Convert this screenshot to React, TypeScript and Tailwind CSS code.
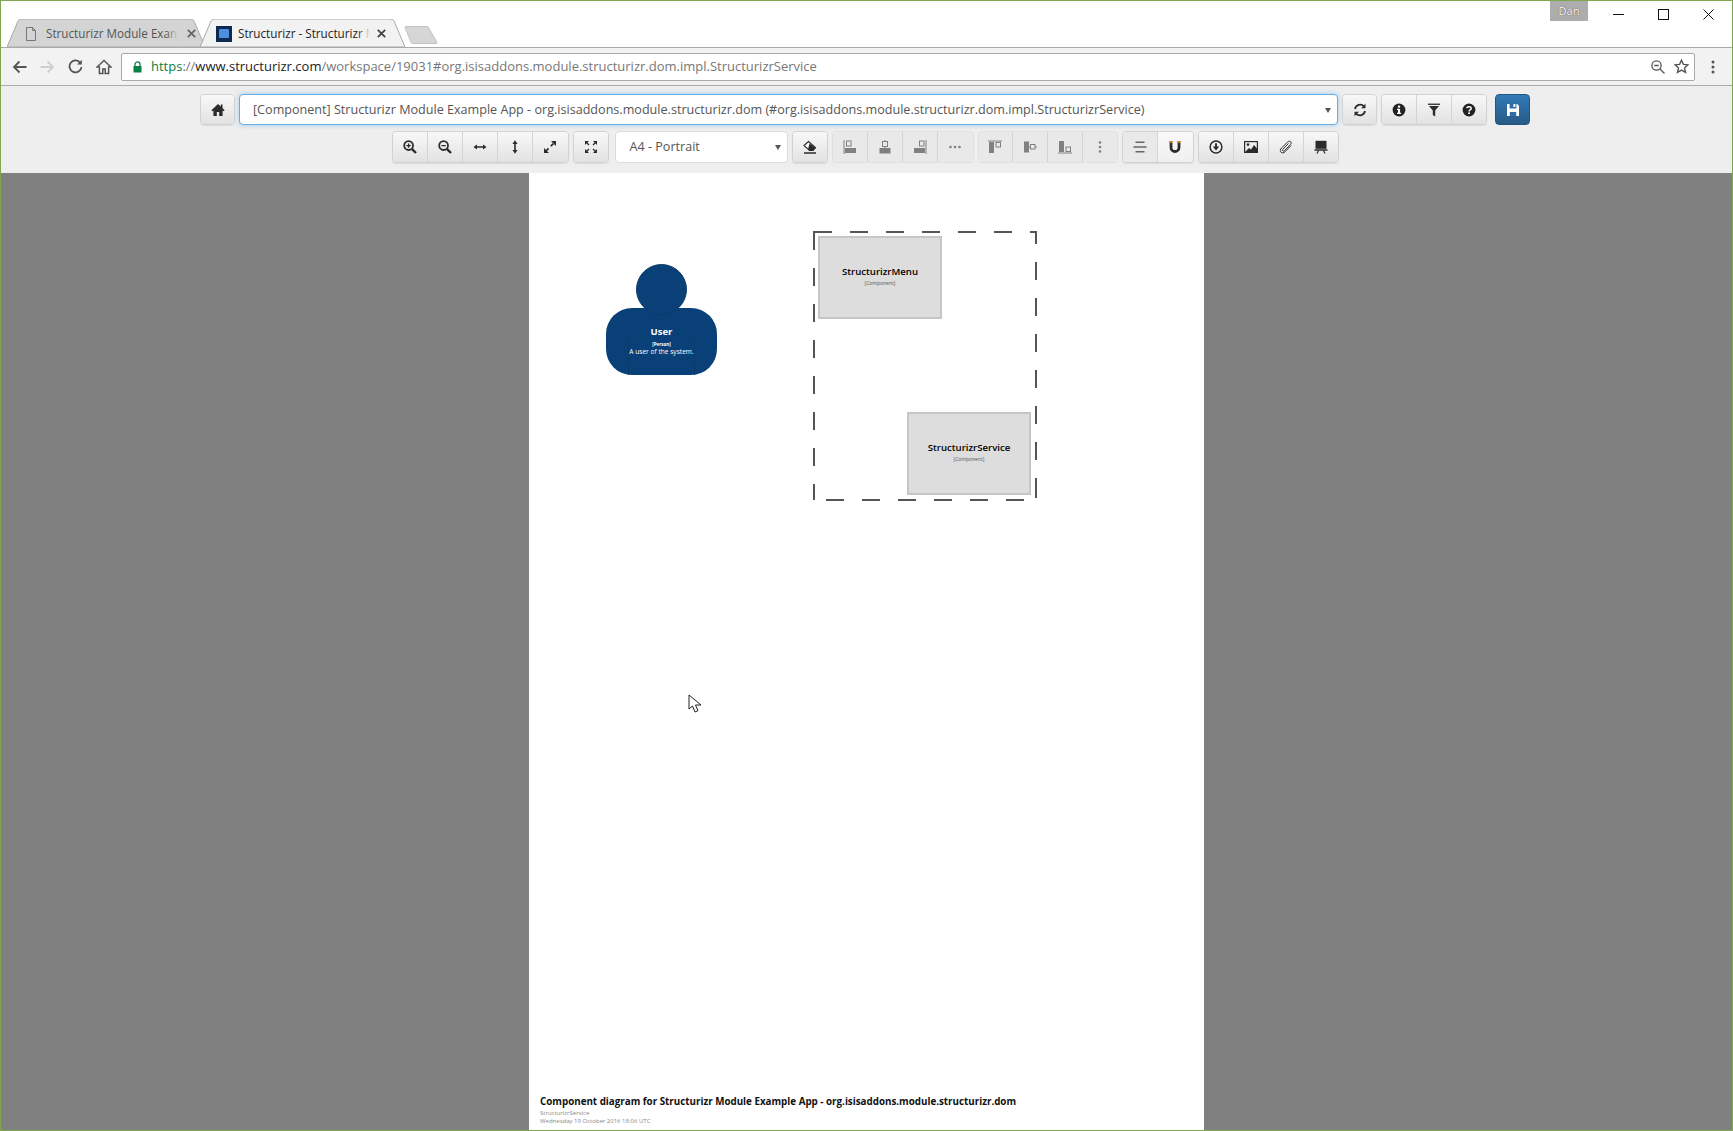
import React from "react";

const S = ({ children, w = 14, h = 14, o = 1 }: { children: React.ReactNode; w?: number; h?: number; o?: number }) => (
  <svg viewBox="0 0 14 14" width={w} height={h} opacity={o} fill="none" stroke="#2b2b2b" strokeWidth={1.6}>
    {children}
  </svg>
);

const ZoomIn = () => (
  <S>
    <circle cx="5.6" cy="5.6" r="4.4" strokeWidth="1.8" />
    <path d="M8.8 8.8L13 13" strokeWidth="2.4" />
    <path d="M3.4 5.6h4.4M5.6 3.4v4.4" strokeWidth="1.4" />
  </S>
);
const ZoomOutI = () => (
  <S>
    <circle cx="5.6" cy="5.6" r="4.4" strokeWidth="1.8" />
    <path d="M8.8 8.8L13 13" strokeWidth="2.4" />
    <path d="M3.4 5.6h4.4" strokeWidth="1.4" />
  </S>
);
const ResizeH = () => (
  <S>
    <path d="M3 7h8" />
    <path d="M0.5 7L4 4.4v5.2zM13.5 7L10 4.4v5.2z" fill="#2b2b2b" stroke="none" />
  </S>
);
const ResizeV = () => (
  <S>
    <path d="M7 3v8" />
    <path d="M7 0.3L4.4 4h5.2zM7 13.7L4.4 10h5.2z" fill="#2b2b2b" stroke="none" />
  </S>
);
const ResizeFull = () => (
  <S>
    <path d="M3 11L11 3" strokeWidth="1.7" strokeDasharray="3.6 3.2" />
    <path d="M8 1h5v5zM1 8v5h5z" fill="#2b2b2b" stroke="none" />
  </S>
);
const Fullscreen = () => (
  <S>
    <path d="M1 1h4L1 5zM13 1H9l4 4zM1 13h4l-4-4zM13 13H9l4-4z" fill="#2b2b2b" stroke="none" />
    <path d="M2.5 2.5L5 5M11.5 2.5L9 5M2.5 11.5L5 9M11.5 11.5L9 9" strokeWidth="1.3" />
  </S>
);
const Eraser = () => (
  <S>
    <path d="M1 5.5L5.5 1.5L12.5 7.5L10 10.5H6.5z" fill="#fff" strokeWidth="1.1" />
    <path d="M6.5 3.5L12.8 8L10 10.8H6.4L5 9.3z" fill="#2b2b2b" stroke="none" />
    <path d="M1 13h12" strokeWidth="1.5" />
  </S>
);
const Al = ({ variant }: { variant: string }) => {
  const c = "#808080";
  const map: Record<string, React.ReactNode> = {
    l: (
      <>
        <path d="M1 0v14" stroke={c} strokeWidth="1" />
        <rect x="3.5" y="1" width="4.5" height="5" stroke={c} strokeWidth="1" />
        <rect x="2" y="8" width="11" height="5" fill={c} stroke="none" />
      </>
    ),
    c: (
      <>
        <path d="M7 0v2M7 6v2" stroke={c} strokeWidth="1" />
        <rect x="4.5" y="1.5" width="5" height="5" stroke={c} strokeWidth="1" />
        <rect x="1.5" y="8" width="11" height="5.5" fill={c} stroke="none" />
      </>
    ),
    r: (
      <>
        <path d="M13 0v14" stroke={c} strokeWidth="1" />
        <rect x="6.5" y="1" width="4.5" height="5" stroke={c} strokeWidth="1" />
        <rect x="1" y="8" width="11" height="5" fill={c} stroke="none" />
      </>
    ),
    h: (
      <>
        <circle cx="2.5" cy="7" r="1.3" fill={c} stroke="none" />
        <circle cx="7" cy="7" r="1.3" fill={c} stroke="none" />
        <circle cx="11.5" cy="7" r="1.3" fill={c} stroke="none" />
      </>
    ),
    t: (
      <>
        <path d="M0 1h14" stroke={c} strokeWidth="1" />
        <rect x="1" y="2" width="5" height="11" fill={c} stroke="none" />
        <rect x="8" y="2.5" width="4.5" height="4.5" stroke={c} strokeWidth="1" />
      </>
    ),
    m: (
      <>
        <rect x="1" y="1.5" width="5" height="11" fill={c} stroke="none" />
        <path d="M6 7h1.5M12 7h2" stroke={c} strokeWidth="1" />
        <rect x="7.5" y="4.5" width="4.5" height="4.5" stroke={c} strokeWidth="1" />
      </>
    ),
    b: (
      <>
        <path d="M0 13h14" stroke={c} strokeWidth="1" />
        <rect x="1" y="1" width="5" height="11" fill={c} stroke="none" />
        <rect x="8" y="7" width="4.5" height="4.5" stroke={c} strokeWidth="1" />
      </>
    ),
    v: (
      <>
        <circle cx="7" cy="2.5" r="1.3" fill={c} stroke="none" />
        <circle cx="7" cy="7" r="1.3" fill={c} stroke="none" />
        <circle cx="7" cy="11.5" r="1.3" fill={c} stroke="none" />
      </>
    ),
    g: (
      <>
        <path d="M2.5 2.2h9" stroke="#666" strokeWidth="1.6" />
        <path d="M0.5 7h13" stroke="#666" strokeWidth="1.6" />
        <path d="M2.5 11.8h9" stroke="#666" strokeWidth="1.6" />
      </>
    ),
  };
  return <S>{map[variant]}</S>;
};
const Magnet = () => (
  <S>
    <path d="M3 1v6.5a4 4 0 0 0 8 0V1" strokeWidth="2.8" />
    <path d="M1.6 1h2.8v2H1.6zM9.6 1h2.8v2H9.6z" fill="#c97f2c" stroke="none" />
  </S>
);
const DownCircle = () => (
  <S>
    <circle cx="7" cy="7" r="5.9" strokeWidth="1.5" />
    <path d="M7 3.2v4" strokeWidth="1.9" />
    <path d="M3.8 6.6h6.4L7 10.6z" fill="#2b2b2b" stroke="none" />
  </S>
);
const Picture = () => (
  <S>
    <rect x="0.6" y="1.6" width="12.8" height="10.8" strokeWidth="1.2" />
    <circle cx="4" cy="4.6" r="1.3" fill="#2b2b2b" stroke="none" />
    <path d="M1 12L5 8L7 9.5L10 5L13 8.5V12.5H1z" fill="#2b2b2b" stroke="none" />
  </S>
);
const Clip = () => (
  <S>
    <path
      d="M12 5.5L6 11.8c-1.3 1.3-3 1.4-4 .4s-1-2.7.3-4L8.6 2c1-1 2.3-1 3.1-.3s.7 2-.3 3L5.5 10.6c-.6.6-1.3.6-1.7.2s-.4-1.1.2-1.7L9.5 3.4"
      stroke="#333"
      strokeWidth="1"
    />
  </S>
);
const Presentation = () => (
  <S>
    <rect x="1.5" y="0.8" width="11" height="8" fill="#2b2b2b" stroke="none" />
    <path d="M0.5 10h13" strokeWidth="1.5" />
    <path d="M3 13.5L4.5 10.5M11 13.5L9.5 10.5" strokeWidth="1.2" />
  </S>
);
const HomeSolid = () => (
  <svg viewBox="0 0 14 14" width="14" height="14" fill="#2b2b2b">
    <path d="M7 1L0.4 7.2l1 1L2.4 7.4V13h3.4V9h2.4v4h3.4V7.4l1 .8 1-1L11.5 5V1.6H9.8v1.8z" />
  </svg>
);
const Refresh = () => (
  <S>
    <path d="M2 6a5.2 5.2 0 0 1 9-2.6" strokeWidth="1.7" />
    <path d="M12.5 0.8v4.4H8.1z" fill="#2b2b2b" stroke="none" />
    <path d="M12 8a5.2 5.2 0 0 1-9 2.6" strokeWidth="1.7" />
    <path d="M1.5 13.2V8.8h4.4z" fill="#2b2b2b" stroke="none" />
  </S>
);
const Info = () => (
  <svg viewBox="0 0 14 14" width="14" height="14">
    <circle cx="7" cy="7" r="6.4" fill="#222" />
    <rect x="5.9" y="2.6" width="2.2" height="2" fill="#fff" />
    <path d="M5 5.8h3.1v4h1v1.3H5V9.8h1V7.1H5z" fill="#fff" />
  </svg>
);
const Filter = () => (
  <svg viewBox="0 0 14 14" width="14" height="14" fill="#2b2b2b">
    <rect x="1" y="0.6" width="12" height="1.3" />
    <path d="M2 3h10L8.2 7.6V13.6L5.8 12V7.6z" />
  </svg>
);
const Question = () => (
  <svg viewBox="0 0 14 14" width="14" height="14">
    <circle cx="7" cy="7" r="6.4" fill="#222" />
    <path d="M4.8 5.2C5 3.2 9.2 3.2 9.2 5.4c0 1.5-2.1 1.5-2.1 3" fill="none" stroke="#fff" strokeWidth="1.5" />
    <rect x="6.2" y="9.4" width="1.8" height="1.6" fill="#fff" />
  </svg>
);
const Save = () => (
  <svg viewBox="0 0 14 14" width="14" height="14" fill="#fff">
    <path d="M1 1h2.6v4.4h6.8V1h.9L13 3v10H1z" />
    <rect x="7.4" y="1" width="2" height="3" />
    <rect x="3.8" y="9" width="6.4" height="4" fill="#2f6ea6" />
  </svg>
);

const Btn = ({ children, w = "w-[35px]", flat = false, last = false, light = false }: { children: React.ReactNode; w?: string; flat?: boolean; last?: boolean; light?: boolean }) => (
  <div
    className={`${w} h-full flex items-center justify-center shrink-0 ${last ? "" : "border-r border-[#d4d4d4]"} ${
      light ? "bg-gradient-to-b from-[#fafafa] to-[#efefef]" : flat ? "bg-[#e9e9e9]" : "bg-gradient-to-b from-[#f8f8f8] to-[#e2e2e2]"
    }`}
  >
    {children}
  </div>
);

const Group = ({ children, flat = false }: { children: React.ReactNode; flat?: boolean }) => (
  <div className={`flex h-full rounded-[4px] border overflow-hidden ${flat ? "border-[#dfdfdf]" : "border-[#d2d2d2] shadow-[0_1px_1px_rgba(0,0,0,0.08)]"}`}>{children}</div>
);

const Caret = () => <span className="w-0 h-0 border-x-[3px] border-x-transparent border-t-[5px] border-t-[#555]" />;

const TabShape = ({ w, fill, stroke }: { w: number; fill: string; stroke: string }) => (
  <svg className="absolute left-0 top-0" width={w} height={28} viewBox={`0 0 ${w} 28`}>
    <path d={`M0 28 L11 2 Q12 0 15 0 L${w - 15} 0 Q${w - 12} 0 ${w - 11} 2 L${w} 28 Z`} fill={fill} stroke={stroke} strokeWidth="1" />
  </svg>
);

const CloseX = ({ c }: { c: string }) => (
  <svg width="9" height="9" viewBox="0 0 9 9" stroke={c} strokeWidth="1.8" className="shrink-0">
    <path d="M0.8 0.8l7.4 7.4M8.2 0.8l-7.4 7.4" />
  </svg>
);

export default function App() {
  return (
    <div className="w-[1733px] h-[1131px] flex flex-col overflow-hidden border border-[#7fa650] bg-white font-['Open_Sans','Noto_Sans',sans-serif]">
      {/* tab strip */}
      <div className="h-[47px] shrink-0 bg-white relative flex items-end pl-[6px] border-b border-[#a9a9a9]">
        <div className="relative w-[198px] h-[28px] shrink-0">
          <TabShape w={198} fill="#d4d4d4" stroke="#a9a9a9" />
          <div className="relative h-full flex items-center pl-[18px] pt-[1px] text-[11.7px] text-[#555]">
            <svg width="12" height="14" viewBox="0 0 12 14" fill="none" stroke="#777" strokeWidth="1" className="shrink-0">
              <path d="M1.5 0.5h6l3 3v10h-9zM7.5 0.5v3h3" />
            </svg>
            <span className="ml-[9px] w-[132px] relative whitespace-nowrap overflow-hidden">
              Structurizr Module Examp
              <span className="absolute right-0 top-0 bottom-0 w-[12px] bg-gradient-to-r from-transparent to-[#d4d4d4]" />
            </span>
            <span className="ml-[9px] flex"><CloseX c="#666" /></span>
          </div>
        </div>
        <div className="relative w-[205px] h-[28px] shrink-0 -ml-[5px]">
          <TabShape w={205} fill="#f2f2f2" stroke="#a9a9a9" />
          <div className="relative h-full flex items-center pl-[16px] pt-[1px] text-[11.7px] text-[#222]">
            <span className="w-[16px] h-[16px] bg-[#0d2a52] flex items-center justify-center shrink-0">
              <span className="w-[10px] h-[9px] bg-[#4d8fdc] rounded-[1px]" />
            </span>
            <span className="ml-[6px] w-[132px] relative whitespace-nowrap overflow-hidden">
              Structurizr - Structurizr Module
              <span className="absolute right-0 top-0 bottom-0 w-[12px] bg-gradient-to-r from-transparent to-[#f2f2f2]" />
            </span>
            <span className="ml-[7px] flex"><CloseX c="#444" /></span>
          </div>
        </div>
        <svg className="ml-[-1px] mb-[3px] shrink-0" width="34" height="18" viewBox="0 0 34 18">
          <path d="M1 1.5Q1 .5 2 .5H24L33 16.5Q33.5 17.5 32 17.5H9Q7.5 17.5 7 16.5z" fill="#d6d6d6" stroke="#c4c4c4" />
        </svg>
        <div className="absolute right-[144px] top-0 w-[38px] h-[20px] bg-[#adadad] flex items-center justify-center text-[11px] text-white [text-shadow:0_0_1px_#222]">Dan</div>
        <div className="absolute right-[18px] top-[8px] flex items-center gap-[34px]">
          <svg width="11" height="11" viewBox="0 0 11 11" stroke="#111" strokeWidth="1"><path d="M0 5.5h11" /></svg>
          <svg width="11" height="11" viewBox="0 0 11 11" stroke="#111" strokeWidth="1" fill="none"><rect x="0.5" y="0.5" width="10" height="10" /></svg>
          <svg width="11" height="11" viewBox="0 0 11 11" stroke="#111" strokeWidth="1"><path d="M0.5 0.5l10 10M10.5 0.5l-10 10" /></svg>
        </div>
      </div>

      {/* address bar */}
      <div className="h-[38px] shrink-0 bg-[#f2f2f2] border-b border-[#ababab] flex items-center pl-[11px] pr-[1px]">
        <div className="flex items-center gap-[13px] w-[109px] shrink-0">
          <svg width="15" height="14" viewBox="0 0 15 14" fill="none" stroke="#555" strokeWidth="1.8"><path d="M14.5 7H2M7.5 1.5L2 7l5.5 5.5" /></svg>
          <svg width="15" height="14" viewBox="0 0 15 14" fill="none" stroke="#cfcfcf" strokeWidth="1.8"><path d="M0.5 7H13M7.5 1.5L13 7l-5.5 5.5" /></svg>
          <svg width="15" height="15" viewBox="0 0 15 15" fill="none" stroke="#555" strokeWidth="1.8"><path d="M12.6 4.2A6 6 0 1 0 13.5 8" /><path d="M13.8 0.8v4.8H9z" fill="#555" stroke="none" /></svg>
          <svg width="16" height="16" viewBox="0 0 16 16" fill="none" stroke="#555" strokeWidth="1.5"><path d="M8 1.5L1 8h2.4v6.5h3.4V10h2.4v4.5h3.4V8H15z" /></svg>
        </div>
        <div className="flex-1 h-[28px] bg-white border border-[#a9a9a9] rounded-[2px] flex items-center pl-[11px] pr-[5px] text-[13px] whitespace-nowrap">
          <svg width="9" height="12" viewBox="0 0 9 12" className="shrink-0">
            <path d="M2 5V3.4a2.5 2.5 0 0 1 5 0V5" fill="none" stroke="#0b8043" strokeWidth="1.3" />
            <rect x="0.5" y="5" width="8" height="6.5" fill="#0b8043" />
          </svg>
          <span className="ml-[9px] text-[#0b8043]">https</span>
          <span className="text-[#777]">://</span>
          <span className="text-[#222]">www.structurizr.com</span>
          <span className="text-[#777]">/workspace/19031#org.isisaddons.module.structurizr.dom.impl.StructurizrService</span>
          <div className="ml-auto flex items-center gap-[9px]">
            <svg width="14" height="14" viewBox="0 0 14 14" fill="none" stroke="#555" strokeWidth="1.3"><circle cx="5.5" cy="5.5" r="4.6" /><path d="M3.3 5.5h4.4M9 9l4.5 4.5" /></svg>
            <svg width="15" height="15" viewBox="0 0 15 15" fill="none" stroke="#555" strokeWidth="1.4"><path d="M7.5 1.2l1.9 4.2 4.5.5-3.4 3 1 4.5-4-2.3-4 2.3 1-4.5-3.4-3 4.5-.5z" /></svg>
          </div>
        </div>
        <div className="w-[36px] shrink-0 flex justify-center">
          <svg width="4" height="14" viewBox="0 0 4 14" fill="#555"><circle cx="2" cy="2" r="1.5" /><circle cx="2" cy="7" r="1.5" /><circle cx="2" cy="12" r="1.5" /></svg>
        </div>
      </div>

      {/* app toolbars */}
      <div className="h-[87px] shrink-0 bg-[#eeeeee] flex flex-col items-center pt-[8px] gap-[6px] pr-[3px]">
        <div className="h-[31px] flex items-center gap-[4px] text-[#333]">
          <div className="w-[35px] h-full"><Group><Btn w="w-[33px]" last><HomeSolid /></Btn></Group></div>
          <div className="w-[1099px] h-full bg-white rounded-[4px] border border-[#66afe9] shadow-[0_0_5px_rgba(102,175,233,0.6)] flex items-center pl-[13px] pr-[6px] pt-[1px] text-[12.6px] text-[#555] whitespace-nowrap">
            <span>[Component] Structurizr Module Example App - org.isisaddons.module.structurizr.dom (#org.isisaddons.module.structurizr.dom.impl.StructurizrService)</span>
            <span className="ml-auto flex"><Caret /></span>
          </div>
          <Group><Btn w="w-[33px]" last><Refresh /></Btn></Group>
          <Group>
            <Btn><Info /></Btn>
            <Btn><Filter /></Btn>
            <Btn w="w-[34px]" last><Question /></Btn>
          </Group>
          <div className="ml-[4px] w-[35px] h-full rounded-[4px] border border-[#245580] bg-gradient-to-b from-[#337ab7] to-[#265a88] flex items-center justify-center"><Save /></div>
        </div>
        <div className="h-[32px] flex items-center gap-[4px] text-[#333]">
          <Group>
            <Btn><ZoomIn /></Btn>
            <Btn><ZoomOutI /></Btn>
            <Btn><ResizeH /></Btn>
            <Btn><ResizeV /></Btn>
            <Btn last><ResizeFull /></Btn>
          </Group>
          <Group><Btn w="w-[34px]" last><Fullscreen /></Btn></Group>
          <div className="ml-[2px] w-[173px] h-full bg-white rounded-[4px] border border-[#dcdcdc] flex items-center pl-[14px] pr-[6px] pt-[1px] text-[12.6px] text-[#555]">
            <span>A4 - Portrait</span>
            <span className="ml-auto flex"><Caret /></span>
          </div>
          <Group><Btn w="w-[34px]" last><Eraser /></Btn></Group>
          <Group flat>
            <Btn flat><Al variant="l" /></Btn>
            <Btn flat><Al variant="c" /></Btn>
            <Btn flat><Al variant="r" /></Btn>
            <Btn flat last><Al variant="h" /></Btn>
          </Group>
          <Group flat>
            <Btn flat w="w-[34px]"><Al variant="t" /></Btn>
            <Btn flat><Al variant="m" /></Btn>
            <Btn flat><Al variant="b" /></Btn>
            <Btn flat last w="w-[34px]"><Al variant="v" /></Btn>
          </Group>
          <Group>
            <Btn flat><Al variant="g" /></Btn>
            <Btn light last><Magnet /></Btn>
          </Group>
          <Group>
            <Btn><DownCircle /></Btn>
            <Btn><Picture /></Btn>
            <Btn><Clip /></Btn>
            <Btn last w="w-[34px]"><Presentation /></Btn>
          </Group>
        </div>
      </div>

      {/* canvas */}
      <div className="flex-1 min-h-0 bg-[#808080] flex justify-center relative">
        <div className="relative w-[675px] h-full bg-white font-['Open_Sans',sans-serif]">
          {/* person */}
          <div className="absolute left-[77px] top-[135px] w-[111px] h-[67px] rounded-[26px] bg-[#0a4078]" />
          <div className="absolute left-[107px] top-[91px] w-[51px] h-[51px] rounded-full bg-[#0a4078] border border-[#0d3a6b]" />
          <div className="absolute left-[99px] top-[165px] w-[67px] h-[37px] border-x border-[#0d3a6b]" />
          <div className="absolute left-[77px] top-[154px] w-[111px] flex flex-col items-center text-white leading-none">
            <span className="text-[9.5px] font-bold">User</span>
            <span className="mt-[5px] text-[4.5px] font-bold">[Person]</span>
            <span className="mt-[3px] text-[6.6px]">A user of the system.</span>
          </div>

          {/* boundary */}
          <svg className="absolute left-[283px] top-[57px]" width="228" height="276" viewBox="0 0 228 276" fill="none" stroke="#555" strokeWidth="2">
            <path d="M2 20V2H20M38 2H56M74 2H92M110 2H128M146 2H164M182 2H200M218 2H224V14" />
            <path d="M224 32V50M224 68V86M224 104V122M224 140V158M224 176V194M224 212V230M224 248V268" />
            <path d="M2 38V56M2 74V92M2 110V128M2 146V164M2 182V200M2 218V236M2 254V270" />
            <path d="M14 270H32M50 270H68M86 270H104M122 270H140M158 270H176M194 270H212" />
          </svg>

          {/* components */}
          <div className="absolute left-[289px] top-[63px] w-[124px] h-[83px] bg-[#dddddd] border-2 border-[#c6c6c6] flex flex-col items-center justify-center pb-[2px] leading-none">
            <span className="text-[9.6px] font-semibold text-black">StructurizrMenu</span>
            <span className="mt-[4px] text-[5px] text-[#555]">[Component]</span>
          </div>
          <div className="absolute left-[378px] top-[239px] w-[124px] h-[83px] bg-[#dddddd] border-2 border-[#c6c6c6] flex flex-col items-center justify-center pb-[2px] leading-none">
            <span className="text-[9.6px] font-semibold text-black">StructurizrService</span>
            <span className="mt-[4px] text-[5px] text-[#555]">[Component]</span>
          </div>

          {/* cursor */}
          <svg className="absolute left-[159px] top-[521px]" width="15" height="20" viewBox="0 0 15 20" fill="#fff" stroke="#222" strokeWidth="1">
            <path d="M1 1v14l3.5-3 2.5 6 3-1.3-2.5-5.7H13z" />
          </svg>

          {/* footer */}
          <div className="absolute left-[11px] bottom-[6px] flex flex-col leading-none">
            <span className="text-[9.8px] font-bold text-[#111] whitespace-nowrap">Component diagram for Structurizr Module Example App - org.isisaddons.module.structurizr.dom</span>
            <span className="mt-[3px] text-[6px] text-[#888]">StructurizrService</span>
            <span className="mt-[2px] text-[6px] text-[#888]">Wednesday 19 October 2016 18:06 UTC</span>
          </div>
        </div>
      </div>
    </div>
  );
}
